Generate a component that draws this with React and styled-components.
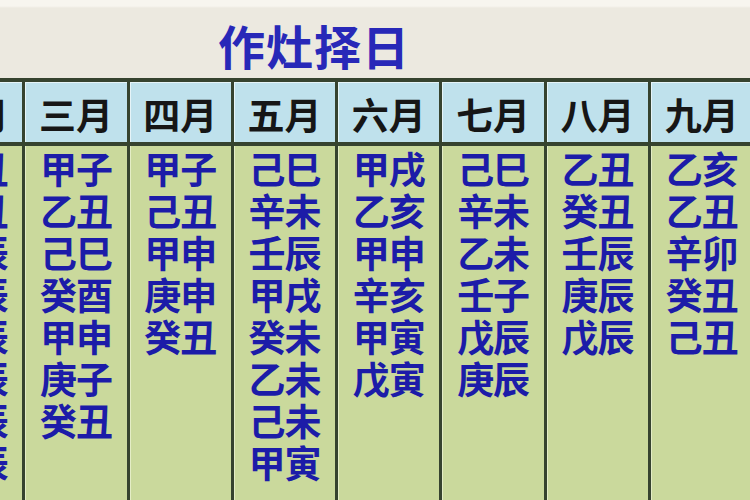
import React from 'react';
import styled, { createGlobalStyle } from 'styled-components';

const GlobalStyle = createGlobalStyle`
  html, body {
    margin: 0;
    padding: 0;
    background: #ece9e0;
  }
`;

const Page = styled.div`
  width: 750px;
  height: 500px;
  overflow: hidden;
  background: #ece9e0;
  font-family: "Noto Sans CJK SC", "Noto Sans", sans-serif;
  display: flex;
  flex-direction: column;
`;

const TitleBar = styled.div`
  height: 78px;
  flex-shrink: 0;
  display: flex;
  align-items: center;
  justify-content: center;
  padding: 10px 122px 0 0;
  box-sizing: border-box;
  background: linear-gradient(#f7f5ef 0, #f7f5ef 6px, #ece9e0 8px);
`;

const Title = styled.h1`
  margin: 0;
  font-size: 47px;
  font-weight: 700;
  color: #2828b8;
  letter-spacing: 1px;
  line-height: 1;
`;

const Table = styled.div`
  flex: 1;
  display: grid;
  grid-template-columns: repeat(8, 104.3px);
  margin-left: -82px;
  border-top: 4px solid #36432f;
  box-shadow: inset 0 1px 0 #f3f3ea;
`;

const Column = styled.div`
  display: flex;
  flex-direction: column;
  border-left: 3px solid #36432f;
`;

const HeaderCell = styled.div`
  height: 64px;
  flex-shrink: 0;
  display: flex;
  align-items: center;
  justify-content: center;
  padding-top: 4px;
  box-sizing: border-box;
  background: #bfe1ec;
  border-bottom: 4px solid #36432f;
  box-shadow: inset 1px 1px 0 #e6f4f8;
  color: #161616;
  font-size: 37px;
  font-weight: 700;
`;

const BodyCell = styled.div`
  flex: 1;
  display: flex;
  flex-direction: column;
  align-items: center;
  padding-top: 1px;
  background: #cad99c;
  box-shadow: inset 1px 0 0 #e4edc6;
`;

const Stem = styled.div`
  font-size: 37px;
  line-height: 42px;
  font-weight: 700;
  color: #1c1ca8;
  letter-spacing: -1px;
`;

const columns = [
  { month: '二月', days: ['乙丑', '己丑', '甲辰', '丙辰', '戊辰', '庚辰', '壬辰', '甲辰'] },
  { month: '三月', days: ['甲子', '乙丑', '己巳', '癸酉', '甲申', '庚子', '癸丑'] },
  { month: '四月', days: ['甲子', '己丑', '甲申', '庚申', '癸丑'] },
  { month: '五月', days: ['己巳', '辛未', '壬辰', '甲戌', '癸未', '乙未', '己未', '甲寅'] },
  { month: '六月', days: ['甲戌', '乙亥', '甲申', '辛亥', '甲寅', '戊寅'] },
  { month: '七月', days: ['己巳', '辛未', '乙未', '壬子', '戊辰', '庚辰'] },
  { month: '八月', days: ['乙丑', '癸丑', '壬辰', '庚辰', '戊辰'] },
  { month: '九月', days: ['乙亥', '乙丑', '辛卯', '癸丑', '己丑'] },
];

export default function App() {
  return (
    <Page>
      <GlobalStyle />
      <TitleBar>
        <Title>作灶择日</Title>
      </TitleBar>
      <Table>
        {columns.map((col) => (
          <Column key={col.month}>
            <HeaderCell>{col.month}</HeaderCell>
            <BodyCell>
              {col.days.map((d, i) => (
                <Stem key={i}>{d}</Stem>
              ))}
            </BodyCell>
          </Column>
        ))}
      </Table>
    </Page>
  );
}
